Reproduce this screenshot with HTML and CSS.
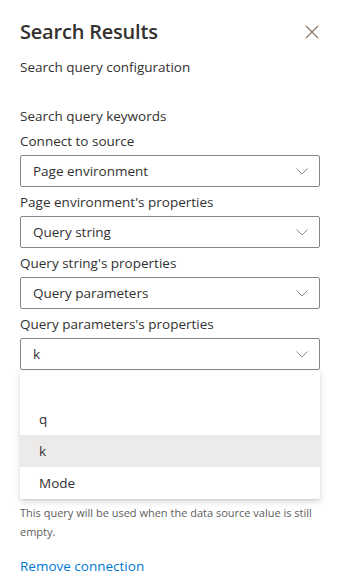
FILE: index.html
```html
<!DOCTYPE html>
<html lang="en">
<head>
  <meta charset="UTF-8" />
  <title>Search Results</title>
  <link rel="stylesheet" href="styles.css">
</head>
<body>

  <div class="panel">
    <div class="panel-header">
      <h2>Search Results</h2>
      <button class="close-btn" title="Close">
        <svg width="14" height="14" viewBox="0 0 14 14">
          <path d="M1 1 L13 13 M13 1 L1 13" stroke="#8a6d5a" stroke-width="1.1" fill="none" />
        </svg>
      </button>
    </div>

    <p class="group-title">Search query configuration</p>

    <div class="section-title">Search query keywords</div>

    <label class="field-label">Connect to source</label>
    <div class="dropdown">
      <span class="dropdown-title">Page environment</span>
      <svg class="chevron" width="12" height="7" viewBox="0 0 12 7"><path d="M0.5 0.5 L6 6 L11.5 0.5" /></svg>
    </div>

    <label class="field-label">Page environment's properties</label>
    <div class="dropdown">
      <span class="dropdown-title">Query string</span>
      <svg class="chevron" width="12" height="7" viewBox="0 0 12 7"><path d="M0.5 0.5 L6 6 L11.5 0.5" /></svg>
    </div>

    <label class="field-label">Query string's properties</label>
    <div class="dropdown">
      <span class="dropdown-title">Query parameters</span>
      <svg class="chevron" width="12" height="7" viewBox="0 0 12 7"><path d="M0.5 0.5 L6 6 L11.5 0.5" /></svg>
    </div>

    <label class="field-label">Query parameters's properties</label>
    <div class="dropdown-wrap">
      <div class="dropdown open">
        <span class="dropdown-title">k</span>
        <svg class="chevron" width="12" height="7" viewBox="0 0 12 7"><path d="M0.5 0.5 L6 6 L11.5 0.5" /></svg>
      </div>
      <ul class="dropdown-menu">
        <li class="option"></li>
        <li class="option">q</li>
        <li class="option selected">k</li>
        <li class="option">Mode</li>
      </ul>
    </div>

    <!-- default value field, covered by the open menu -->
    <div class="default-field">
      <label class="field-label">Default query text</label>
      <div class="text-area"></div>
    </div>

    <p class="description">This query will be used when the data source value is still empty.</p>

    <a class="link" href="#">Remove connection</a>
  </div>

</body>
</html>
```

FILE: styles.css
```css
body {
  margin: 0;
  font-family: "Open Sans", "Noto Sans", Arial, sans-serif;
  font-size: 14px;
  color: #323130;
  background: white;
}
.panel {
  padding: 0 20px;
}
.panel-header {
  display: flex;
  justify-content: space-between;
  align-items: center;
  padding-top: 18px;
}
.panel-header h2 {
  margin: 0;
  font-size: 20px;
  font-weight: 600;
  line-height: 28px;
  letter-spacing: -0.2px;
}
.close-btn {
  background: none;
  border: none;
  padding: 0;
  margin-right: 1px;
  width: 14px;
  height: 14px;
  cursor: pointer;
}
.group-title {
  margin: 11px 0 0;
  line-height: 20px;
  font-size: 13.5px;
}
.section-title {
  margin-top: 29px;
  line-height: 20px;
  font-size: 13.5px;
}
.field-label {
  display: block;
  padding: 5px 0 4px;
  line-height: 20px;
  font-size: 13.5px;
}
.dropdown {
  display: flex;
  justify-content: space-between;
  align-items: center;
  box-sizing: border-box;
  height: 32px;
  padding: 0 11px 0 12px;
  border: 1px solid #8a8886;
  border-radius: 2px;
  background: white;
  font-size: 13.5px;
}
.dropdown-title {
  line-height: 30px;
}
.chevron path {
  fill: none;
  stroke: #8e8c8a;
  stroke-width: 1;
}
.dropdown-wrap {
  position: relative;
}
.dropdown-menu {
  position: absolute;
  top: calc(100% + 1px);
  left: 0;
  right: 0;
  margin: 0;
  padding: 0;
  list-style: none;
  background: white;
  box-shadow: 0 3px 7px rgba(0, 0, 0, 0.13), 0 0.6px 1.8px rgba(0, 0, 0, 0.11);
  z-index: 2;
}
.option {
  height: 32px;
  line-height: 32px;
  padding: 0 19px;
  font-size: 13.5px;
}
.option.selected {
  background: #edebe9;
}
.default-field {
  height: 133px;
}
.text-area {
  height: 80px;
  border: 1px solid #8a8886;
}
.description {
  margin: 0;
  font-size: 11px;
  line-height: 19px;
  color: #605e5c;
}
.link {
  display: block;
  margin-top: 15px;
  line-height: 20px;
  font-size: 13.5px;
  color: #0078d4;
  text-decoration: none;
}
```
